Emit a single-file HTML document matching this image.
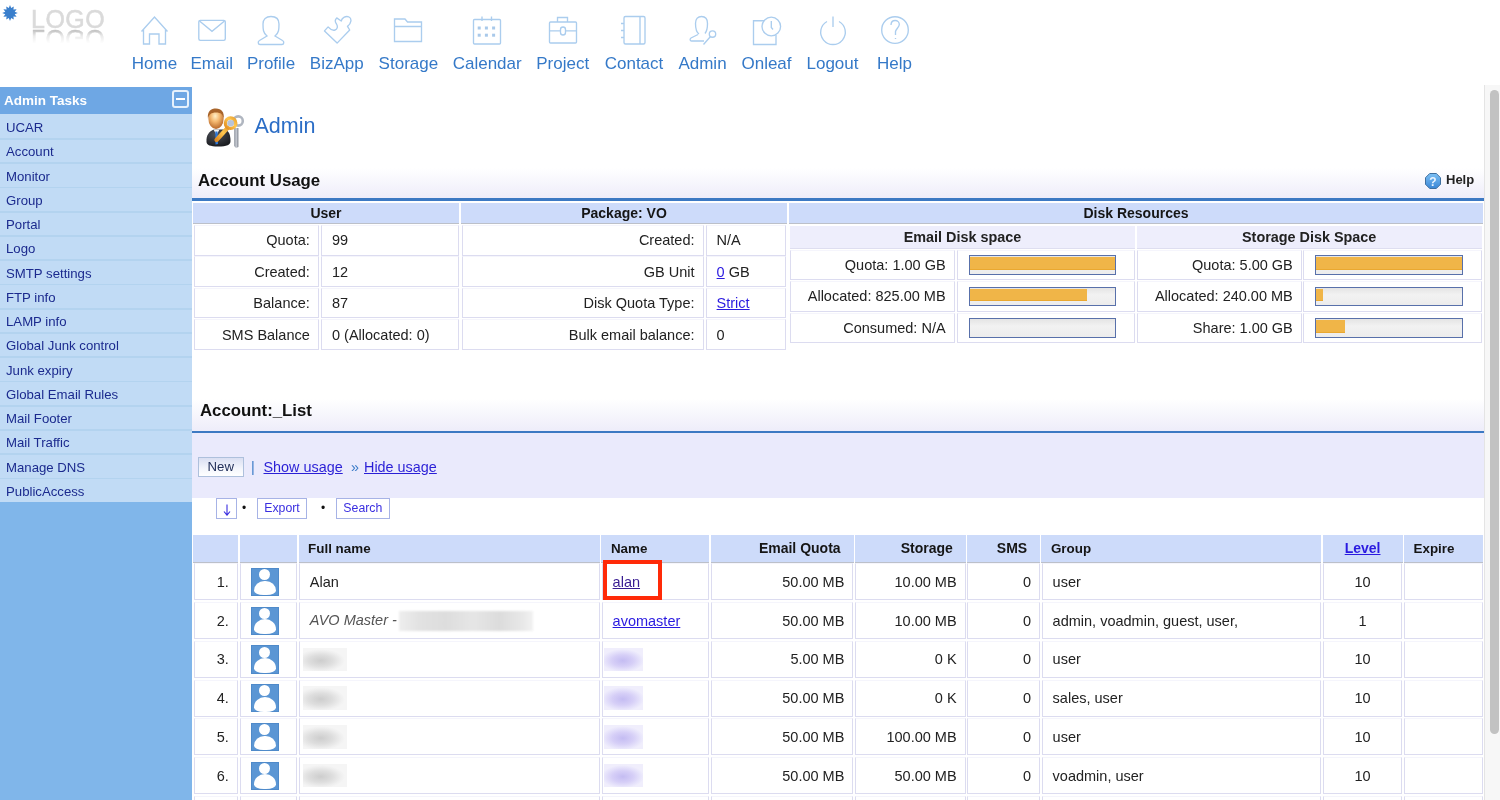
<!DOCTYPE html>
<html><head><meta charset="utf-8"><title>Admin</title>
<style>
*{box-sizing:border-box}
html,body{margin:0;padding:0;width:1500px;height:800px;overflow:hidden;background:#fff;font-family:"Liberation Sans",sans-serif;color:#222}
.abs{position:absolute}
#logo-star{left:2px;top:4.7px;width:16px;height:16px}
#logo{left:31px;top:7.3px;font-size:25px;color:#dadada;letter-spacing:0.5px;line-height:25px;-webkit-text-stroke:0.5px #dadada;filter:blur(0.5px)}
#logo2{left:31px;top:26px;font-size:25px;line-height:25px;letter-spacing:0.5px;color:#b0b0b0;-webkit-text-stroke:0.4px #b0b0b0;transform:scaleY(-1);-webkit-mask-image:linear-gradient(to top,rgba(0,0,0,.9) 12%,rgba(0,0,0,.25) 40%,rgba(0,0,0,0) 70%);filter:blur(0.6px)}
.nav{position:absolute;top:0;height:80px}
.nav svg{position:absolute;top:14px;left:50%;margin-left:-15px;width:30px;height:32px;fill:none;stroke:#abcdee;stroke-width:1.35}
.nav span{position:absolute;top:53.6px;left:0;transform:translateX(-50%);font-size:17px;color:#3579c8;white-space:nowrap;line-height:20px}
#side{left:0;top:86.5px;width:191.8px;height:714px;background:#80b6ea}
#side .hd{height:27.5px;background:#6ea7e4;color:#fff;font-weight:bold;font-size:13.5px;line-height:28px;padding-left:4px;position:relative}
#side .hd i{position:absolute;left:172px;top:3.5px;width:17.2px;height:17.6px;border:2px solid #e6f1fc;border-radius:3px}
#side .hd i:after{content:"";position:absolute;left:2.2px;right:2.2px;top:6.2px;height:1.8px;background:#fff}
#side .it{position:relative;height:24.25px;background:#c1dbf5;color:#1b2a8e;font-size:13.2px;line-height:27.8px;padding-left:6px}
#side .it+.it:before{content:"";position:absolute;left:0;right:0;top:-0.2px;height:1.9px;background:#b3d3ef}

#main{position:absolute;left:0;top:0;width:1500px;height:800px}
.th,.td,.sh,.bar{position:absolute}
.th{background:#cddbfa;border-bottom:1.8px solid #bcc0c9;font-weight:bold;font-size:13.4px;display:flex;align-items:center;justify-content:center;text-align:center;color:#151515}
.th.u{font-size:14px}
.th.l{justify-content:flex-start;padding-left:9.5px}
.th.r{justify-content:flex-end;padding-right:13px;font-size:14px}
.th.c{font-size:14px}
.th a{color:#2a1ae0;text-decoration:underline}
.sh{background:#eeeefc;font-weight:bold;font-size:14.4px;line-height:22px;text-align:center;color:#222;border-bottom:1px solid #dedef0}
.td{border:1px solid #dcdcf0;border-top-color:#f5f5fc;font-size:14.5px;color:#222;display:flex;align-items:center;white-space:nowrap}
.td.r{justify-content:flex-end;padding-right:8px}
.td.l{padding-left:10px}
.td.c{justify-content:center}
.td a{color:#2a1ae0;text-decoration:underline}
.td a.v{color:#381c92}
.td em{color:#555}
.bar{border:1px solid #5870aa;background:linear-gradient(#e4e4e4,#f2f2f2 40%,#ececec)}
.bar i{position:absolute;left:0;top:1px;height:12.5px;background:#f0b548;border-bottom:1px solid #eaa830}
.blur{display:inline-block;height:23.5px;vertical-align:middle}
.blur.g{background:radial-gradient(ellipse 55% 50% at 40% 55%,#cdcdcd 0%,#dedede 50%,#efefef 85%,#f5f5f5 100%)}
.blur.w{background:linear-gradient(90deg,#eeeeee 0%,#e2e2e2 15%,#dddddd 35%,#e6e6e6 55%,#dcdcdc 75%,#e8e8e8 92%,#f2f2f2 100%);filter:blur(1.2px)}
.blur.p{background:radial-gradient(ellipse 55% 50% at 48% 55%,#c4bcf2 0%,#d6cff7 50%,#e8e5fb 85%,#f0eefc 100%)}
.av{display:block;width:28.5px;height:28.25px;background:#5b96d4;position:relative;overflow:hidden;margin-left:-6.5px;box-shadow:inset 0 0 0 1px #4f8aca}
.av:before{content:"";position:absolute;left:8.4px;top:1.3px;width:11px;height:11px;border-radius:50%;background:#fff}
.av:after{content:"";position:absolute;left:3px;top:12.75px;width:22px;height:14.75px;border-radius:50% 50% 45% 45%/70% 70% 30% 30%;background:#fff}
.hdr{position:absolute;left:192px;width:1292px;background:linear-gradient(#fff 0%,#fff 20%,#ecebf9 100%)}
.hdr:after{content:"";position:absolute;left:0;right:0;bottom:0;height:2.6px;background:#3c79c3}
.hdr b{position:absolute;left:6px;font-size:16.8px;color:#111}
#scroll{position:absolute;left:1484px;top:85px;width:16px;height:715px;background:#f7f7f7;border-left:1px solid #e4e4e4}
#scroll i{position:absolute;left:4.5px;top:5px;width:9.5px;height:644px;border-radius:5px;background:#c2c2c2}
.btn2{position:absolute;border:1px solid #a7b3e6;background:#fff;color:#3a2ee0;font-size:12.3px;line-height:18px;text-align:center}
#root{position:absolute;left:0;top:0;width:1500px;height:800px;will-change:transform}
</style></head><body><div id="root">
<svg class="abs" id="logo-star" viewBox="0 0 16 16"><polygon fill="#3a7fcc" points="8,0 9.2,3 11.8,1.4 11.4,4.5 14.6,4.2 12.7,6.8 15.8,8 12.7,9.2 14.6,11.8 11.4,11.5 11.8,14.6 9.2,13 8,16 6.8,13 4.2,14.6 4.6,11.5 1.4,11.8 3.3,9.2 0.2,8 3.3,6.8 1.4,4.2 4.6,4.5 4.2,1.4 6.8,3"/></svg>
<div class="abs" id="logo">LOGO</div>
<div class="abs" id="logo2">LOGO</div>

<!-- NAV -->
<div class="nav" style="left:154.5px"><svg viewBox="0 0 30 32"><path d="M1.5 17.5 L14.5 3 L27.5 17.5 M3.5 15.5 V30 H9.5 V20 H19 V30 H25.5 V15.5"/></svg><span>Home</span></div>
<div class="nav" style="left:211.7px"><svg viewBox="0 0 30 32"><rect x="1.8" y="6.3" width="26.5" height="20" rx="1.5"/><path d="M2.5 7 L15 17.3 L27.5 7"/></svg><span>Email</span></div>
<div class="nav" style="left:271px"><svg viewBox="0 0 30 32"><path d="M11 22 C7 19 7 15 7 10 C7 5 10 2.5 15 2.5 C20 2.5 23 5 23 10 C23 15 23 19 19 22 L26.5 26.5 C28.5 27.5 28 30.5 26 30.5 H4 C2 30.5 1.5 27.5 3.5 26.5 Z"/></svg><span>Profile</span></div>
<div class="nav" style="left:336.8px"><svg viewBox="0 0 30 32"><path d="M15.1 29.1 L2.5 16.9 L6.1 12.9 C8.5 15.5 10.5 17 13 16 C15.5 15 16 12.5 14.5 10 C13 8 12.5 6 14.7 3.9 L19.2 7 C20 3.5 24 1.5 27 3 C30 4.5 29.5 9.5 25.5 12.4 L27.7 16 Z" stroke-linejoin="round"/></svg><span>BizApp</span></div>
<div class="nav" style="left:408.4px"><svg viewBox="0 0 30 32"><path d="M1.5 5 H12 L14.5 8 H28.5 V27.5 H1.5 Z M1.5 12.5 H28.5"/></svg><span>Storage</span></div>
<div class="nav" style="left:487.2px"><svg viewBox="0 0 30 32"><rect x="1.5" y="5.5" width="27" height="24.5" rx="1"/><path d="M10 2.5 V7 M19.5 2.5 V7"/><g fill="#a9c9ea" stroke="none"><rect x="5.7" y="12.5" width="3" height="3"/><rect x="12.9" y="12.5" width="3" height="3"/><rect x="20.1" y="12.5" width="3" height="3"/><rect x="5.7" y="19.7" width="3" height="3"/><rect x="12.9" y="19.7" width="3" height="3"/><rect x="20.1" y="19.7" width="3" height="3"/></g></svg><span>Calendar</span></div>
<div class="nav" style="left:562.7px"><svg viewBox="0 0 30 32"><rect x="1.5" y="8" width="27" height="21" rx="1"/><path d="M9.5 8 V3.5 H19.5 V8 M1.5 16.8 H12.5 M17.5 16.8 H28.5"/><rect x="12.5" y="13" width="5" height="8" rx="2.5"/></svg><span>Project</span></div>
<div class="nav" style="left:634px"><svg viewBox="0 0 30 32"><rect x="5" y="2.5" width="21" height="27.5" rx="1.5"/><path d="M21 2.5 V30 M2 9.5 H5 M2 16.5 H5 M2 23.5 H5"/></svg><span>Contact</span></div>
<div class="nav" style="left:702.5px"><svg viewBox="0 0 30 32"><path d="M11 20 C8 18 7.5 14 7.5 9.5 C7.5 5 10 2.5 13.5 2.5 C17 2.5 19.5 5 19.5 9.5 C19.5 13 19 17 17 19.5 M10 20.5 L3 24 C1.5 25 2 27 3.5 27 H16"/><circle cx="24.5" cy="20" r="3.2"/><path d="M22.5 22.5 L15.5 30.5"/></svg><span>Admin</span></div>
<div class="nav" style="left:766.5px"><svg viewBox="0 0 30 32"><path d="M12 6.7 H1.5 V30.5 H24 V21"/><circle cx="19.3" cy="12.5" r="9.3"/><path d="M19.3 7 V13.5 L21 15.5"/></svg><span>Onleaf</span></div>
<div class="nav" style="left:832.5px"><svg viewBox="0 0 30 32"><path d="M9 7.5 A12.3 12.3 0 1 0 21 7.5"/><path d="M15 2.5 V13"/></svg><span>Logout</span></div>
<div class="nav" style="left:894.5px"><svg viewBox="0 0 30 32"><circle cx="15" cy="16" r="13.3"/><path d="M11 11 C11 8 13 6.5 15.2 6.5 C17.5 6.5 19.3 8.3 19.3 10.5 C19.3 13 16 15 15.5 17.5 V21 M15.5 24 V25"/></svg><span>Help</span></div>

<!-- SIDEBAR -->
<div class="abs" id="side">
<div class="hd">Admin Tasks<i></i></div>
<div class="it">UCAR</div>
<div class="it">Account</div>
<div class="it">Monitor</div>
<div class="it">Group</div>
<div class="it">Portal</div>
<div class="it">Logo</div>
<div class="it">SMTP settings</div>
<div class="it">FTP info</div>
<div class="it">LAMP info</div>
<div class="it">Global Junk control</div>
<div class="it">Junk expiry</div>
<div class="it">Global Email Rules</div>
<div class="it">Mail Footer</div>
<div class="it">Mail Traffic</div>
<div class="it">Manage DNS</div>
<div class="it">PublicAccess</div>
</div>


<div id="main">
<!-- title -->
<svg class="abs" style="left:200px;top:104px;width:50px;height:48px" viewBox="0 0 50 48">
 <defs><radialGradient id="face" cx="45%" cy="35%" r="65%"><stop offset="0" stop-color="#fff0c8"/><stop offset=".45" stop-color="#f4b870"/><stop offset="1" stop-color="#b8682a"/></radialGradient>
 <radialGradient id="suit" cx="40%" cy="30%" r="70%"><stop offset="0" stop-color="#50545c"/><stop offset="1" stop-color="#1c1e22"/></radialGradient>
 <linearGradient id="gold" x1="0" y1="1" x2="1" y2="0"><stop offset="0" stop-color="#e08a20"/><stop offset=".6" stop-color="#ffc850"/><stop offset="1" stop-color="#e8a030"/></linearGradient>
 <linearGradient id="silv" x1="0" x2="1"><stop offset="0" stop-color="#8a909a"/><stop offset=".5" stop-color="#c8ccd4"/><stop offset="1" stop-color="#7a808a"/></linearGradient></defs>
 <path d="M6.5 38 C6 31 9 27.5 14 25.5 L25 25.5 C29 27 30.5 31 30.5 37 C30.5 41 27 42.5 18 42.5 C10 42.5 6.8 41 6.5 38 Z" fill="url(#suit)"/>
 <path d="M13.5 25.5 L16.5 31 L19.5 25.5 Z" fill="#f4f4f4"/>
 <path d="M15.3 27.5 L17.5 27.5 L18 40 L15.5 40.5 Z" fill="#2a78dc"/>
 <ellipse cx="16" cy="15" rx="7.6" ry="10" fill="url(#face)"/>
 <path d="M8 15 C7 7 11 4.5 16 4.5 C21.5 4.5 24.5 8 23.8 15 C23 10.5 21 8.5 16 8.5 C11 8.5 9 10.5 8 15 Z" fill="#a8642a"/>
 <path d="M34.2 24 L38.4 24 L38.4 43 L36 44 L34.2 42 Z" fill="url(#silv)"/>
 <circle cx="38.2" cy="17" r="4.6" fill="none" stroke="#b0b6c0" stroke-width="2.6"/>
 <path d="M16.5 36 L27.5 24" stroke="url(#gold)" stroke-width="4.2" stroke-linecap="round"/>
 <circle cx="30.6" cy="19.2" r="5.2" fill="none" stroke="url(#gold)" stroke-width="3.4"/>
 <circle cx="30.6" cy="19.2" r="3.3" fill="#b8c4d8"/>
</svg>
<div class="abs" style="left:254.5px;top:112.5px;font-size:21.5px;color:#2b6dc6;line-height:26px">Admin</div>

<div class="hdr" style="top:160px;height:40.5px"><b style="top:11px">Account Usage</b>
 <svg style="position:absolute;left:1233px;top:13px;width:16px;height:16px" viewBox="0 0 16 16"><defs><linearGradient id="hg" x1="0" y1="0" x2="0" y2="1"><stop offset="0" stop-color="#7cc0f4"/><stop offset="1" stop-color="#3a86d6"/></linearGradient></defs><polygon points="4.7,0.5 11.3,0.5 15.5,4.7 15.5,11.3 11.3,15.5 4.7,15.5 0.5,11.3 0.5,4.7" fill="url(#hg)" stroke="#3f6f9f" stroke-width="1"/><text x="8" y="12.5" font-size="12" font-weight="bold" text-anchor="middle" fill="#eaf4ff" font-family="Liberation Sans">?</text></svg>
 <span style="position:absolute;left:1254px;top:12px;font-weight:bold;font-size:13px;color:#222">Help</span>
</div>

<div class="hdr" style="top:390px;height:43.5px"><b style="top:11px;left:8px">Account:_List</b></div>
<div class="abs" style="left:192px;top:433px;width:1292px;height:65.4px;background:#eaeafc"></div>
<div class="abs" style="left:198px;top:457px;width:45.5px;height:19.8px;border:1px solid #aec0dc;background:linear-gradient(#dadff2,#f4f6fc 60%,#fff);font-size:13.2px;color:#22305a;text-align:center;line-height:18px">New</div>
<div class="abs" style="left:251px;top:457px;font-size:14.4px;color:#3a7bc8;line-height:20px">|</div>
<div class="abs" style="left:263.5px;top:457px;font-size:14.4px;color:#2a1fd6;line-height:20px;text-decoration:underline">Show usage</div>
<div class="abs" style="left:351px;top:457px;font-size:14.4px;color:#3a7bc8;line-height:20px">&raquo;</div>
<div class="abs" style="left:364px;top:457px;font-size:14.4px;color:#2a1fd6;line-height:20px;text-decoration:underline">Hide usage</div>
<div class="btn2" style="left:216.4px;top:498.4px;width:20.4px;height:20.4px"><svg style="position:absolute;left:5px;top:4.5px;width:10px;height:12px" viewBox="0 0 10 12"><path d="M5 0.5 V11 M2 7.5 L5 11.2 L8 7.5" fill="none" stroke="#3a2ee0" stroke-width="1.1"/></svg></div>
<div class="abs" style="left:242px;top:499px;font-size:12px;line-height:18px;color:#111">&bull;</div>
<div class="btn2" style="left:257px;top:498.4px;width:50px;height:20.4px">Export</div>
<div class="abs" style="left:321px;top:499px;font-size:12px;line-height:18px;color:#111">&bull;</div>
<div class="btn2" style="left:336px;top:498.4px;width:53.7px;height:20.4px">Search</div>
<div class="th u" style="left:193.00px;top:203.00px;width:266.00px;height:20.50px;"><span>User</span></div>
<div class="th u" style="left:461.00px;top:203.00px;width:326.00px;height:20.50px;"><span>Package: VO</span></div>
<div class="th u" style="left:789.00px;top:203.00px;width:694.00px;height:20.50px;"><span>Disk Resources</span></div>
<div class="td r" style="left:194.00px;top:225.00px;width:124.80px;height:30.60px;"><span>Quota:</span></div>
<div class="td l" style="left:321.00px;top:225.00px;width:137.50px;height:30.60px;"><span>99</span></div>
<div class="td r" style="left:462.00px;top:225.00px;width:241.50px;height:30.60px;"><span>Created:</span></div>
<div class="td l" style="left:705.60px;top:225.00px;width:80.40px;height:30.60px;"><span>N/A</span></div>
<div class="td r" style="left:194.00px;top:256.45px;width:124.80px;height:30.60px;"><span>Created:</span></div>
<div class="td l" style="left:321.00px;top:256.45px;width:137.50px;height:30.60px;"><span>12</span></div>
<div class="td r" style="left:462.00px;top:256.45px;width:241.50px;height:30.60px;"><span>GB Unit</span></div>
<div class="td l" style="left:705.60px;top:256.45px;width:80.40px;height:30.60px;"><span><a>0</a> GB</span></div>
<div class="td r" style="left:194.00px;top:287.90px;width:124.80px;height:30.60px;"><span>Balance:</span></div>
<div class="td l" style="left:321.00px;top:287.90px;width:137.50px;height:30.60px;"><span>87</span></div>
<div class="td r" style="left:462.00px;top:287.90px;width:241.50px;height:30.60px;"><span>Disk Quota Type:</span></div>
<div class="td l" style="left:705.60px;top:287.90px;width:80.40px;height:30.60px;"><span><a>Strict</a></span></div>
<div class="td r" style="left:194.00px;top:319.35px;width:124.80px;height:30.60px;"><span>SMS Balance</span></div>
<div class="td l" style="left:321.00px;top:319.35px;width:137.50px;height:30.60px;"><span>0 (Allocated: 0)</span></div>
<div class="td r" style="left:462.00px;top:319.35px;width:241.50px;height:30.60px;"><span>Bulk email balance:</span></div>
<div class="td l" style="left:705.60px;top:319.35px;width:80.40px;height:30.60px;"><span>0</span></div>
<div class="sh" style="left:790.30px;top:226.00px;width:344.30px;height:22.60px;"><span>Email Disk space</span></div>
<div class="sh" style="left:1136.60px;top:226.00px;width:345.20px;height:22.60px;"><span>Storage Disk Space</span></div>
<div class="td r" style="left:790.30px;top:249.60px;width:164.30px;height:30.60px;"><span>Quota: 1.00 GB</span></div>
<div class="td" style="left:956.80px;top:249.60px;width:177.80px;height:30.60px;"></div>
<div class="td r" style="left:1136.60px;top:249.60px;width:165.20px;height:30.60px;"><span>Quota: 5.00 GB</span></div>
<div class="td" style="left:1303.40px;top:249.60px;width:178.40px;height:30.60px;"></div>
<div class="bar" style="left:968.80px;top:255.20px;width:147.30px;height:19.40px;"><i style="width:145.3px"></i></div>
<div class="bar" style="left:1315.30px;top:255.20px;width:147.30px;height:19.40px;"><i style="width:145.3px"></i></div>
<div class="td r" style="left:790.30px;top:281.20px;width:164.30px;height:30.60px;"><span>Allocated: 825.00 MB</span></div>
<div class="td" style="left:956.80px;top:281.20px;width:177.80px;height:30.60px;"></div>
<div class="td r" style="left:1136.60px;top:281.20px;width:165.20px;height:30.60px;"><span>Allocated: 240.00 MB</span></div>
<div class="td" style="left:1303.40px;top:281.20px;width:178.40px;height:30.60px;"></div>
<div class="bar" style="left:968.80px;top:286.80px;width:147.30px;height:19.40px;"><i style="width:117.0px"></i></div>
<div class="bar" style="left:1315.30px;top:286.80px;width:147.30px;height:19.40px;"><i style="width:6.8px"></i></div>
<div class="td r" style="left:790.30px;top:312.80px;width:164.30px;height:30.60px;"><span>Consumed: N/A</span></div>
<div class="td" style="left:956.80px;top:312.80px;width:177.80px;height:30.60px;"></div>
<div class="td r" style="left:1136.60px;top:312.80px;width:165.20px;height:30.60px;"><span>Share: 1.00 GB</span></div>
<div class="td" style="left:1303.40px;top:312.80px;width:178.40px;height:30.60px;"></div>
<div class="bar" style="left:968.80px;top:318.40px;width:147.30px;height:19.40px;"></div>
<div class="bar" style="left:1315.30px;top:318.40px;width:147.30px;height:19.40px;"><i style="width:29.1px"></i></div>
<div class="th " style="left:193.00px;top:535.00px;width:45.00px;height:27.50px;"></div>
<div class="th " style="left:239.80px;top:535.00px;width:57.20px;height:27.50px;"></div>
<div class="th l" style="left:298.60px;top:535.00px;width:301.40px;height:27.50px;"><span>Full name</span></div>
<div class="th l" style="left:601.40px;top:535.00px;width:107.80px;height:27.50px;"><span>Name</span></div>
<div class="th r" style="left:711.00px;top:535.00px;width:142.60px;height:27.50px;"><span>Email Quota</span></div>
<div class="th r" style="left:855.00px;top:535.00px;width:110.80px;height:27.50px;"><span>Storage</span></div>
<div class="th r" style="left:967.00px;top:535.00px;width:73.20px;height:27.50px;"><span>SMS</span></div>
<div class="th l" style="left:1041.40px;top:535.00px;width:279.80px;height:27.50px;"><span>Group</span></div>
<div class="th c" style="left:1322.60px;top:535.00px;width:80.00px;height:27.50px;"><span><a>Level</a></span></div>
<div class="th l" style="left:1404.00px;top:535.00px;width:79.00px;height:27.50px;"><span>Expire</span></div>
<div class="td r" style="left:193.60px;top:563.30px;width:44.20px;height:37.20px;"><span>1.</span></div>
<div class="td c" style="left:240.00px;top:563.30px;width:56.80px;height:37.20px;"><span><s class="av"></s></span></div>
<div class="td l" style="left:298.80px;top:563.30px;width:301.00px;height:37.20px;"><span>Alan</span></div>
<div class="td l" style="left:601.60px;top:563.30px;width:107.40px;height:37.20px;"><span><a class="v">alan</a></span></div>
<div class="td r" style="left:711.20px;top:563.30px;width:142.20px;height:37.20px;"><span>50.00 MB</span></div>
<div class="td r" style="left:855.20px;top:563.30px;width:110.40px;height:37.20px;"><span>10.00 MB</span></div>
<div class="td r" style="left:967.20px;top:563.30px;width:72.80px;height:37.20px;"><span>0</span></div>
<div class="td l" style="left:1041.60px;top:563.30px;width:279.40px;height:37.20px;"><span>user</span></div>
<div class="td c" style="left:1322.80px;top:563.30px;width:79.60px;height:37.20px;"><span>10</span></div>
<div class="td l" style="left:1404.20px;top:563.30px;width:78.60px;height:37.20px;"></div>
<div class="td r" style="left:193.60px;top:602.05px;width:44.20px;height:37.20px;"><span>2.</span></div>
<div class="td c" style="left:240.00px;top:602.05px;width:56.80px;height:37.20px;"><span><s class="av"></s></span></div>
<div class="td l" style="left:298.80px;top:602.05px;width:301.00px;height:37.20px;"><span><em>AVO Master - </em><b class="blur w" style="width:134px;height:20px;margin-left:-2px"></b></span></div>
<div class="td l" style="left:601.60px;top:602.05px;width:107.40px;height:37.20px;"><span><a>avomaster</a></span></div>
<div class="td r" style="left:711.20px;top:602.05px;width:142.20px;height:37.20px;"><span>50.00 MB</span></div>
<div class="td r" style="left:855.20px;top:602.05px;width:110.40px;height:37.20px;"><span>10.00 MB</span></div>
<div class="td r" style="left:967.20px;top:602.05px;width:72.80px;height:37.20px;"><span>0</span></div>
<div class="td l" style="left:1041.60px;top:602.05px;width:279.40px;height:37.20px;"><span>admin, voadmin, guest, user,</span></div>
<div class="td c" style="left:1322.80px;top:602.05px;width:79.60px;height:37.20px;"><span>1</span></div>
<div class="td l" style="left:1404.20px;top:602.05px;width:78.60px;height:37.20px;"></div>
<div class="td r" style="left:193.60px;top:640.80px;width:44.20px;height:37.20px;"><span>3.</span></div>
<div class="td c" style="left:240.00px;top:640.80px;width:56.80px;height:37.20px;"><span><s class="av"></s></span></div>
<div class="td l" style="left:298.80px;top:640.80px;width:301.00px;height:37.20px;"><span><b class="blur g" style="width:44px;margin-left:-7px"></b></span></div>
<div class="td l" style="left:601.60px;top:640.80px;width:107.40px;height:37.20px;"><span><b class="blur p" style="width:39px;margin-left:-8.5px"></b></span></div>
<div class="td r" style="left:711.20px;top:640.80px;width:142.20px;height:37.20px;"><span>5.00 MB</span></div>
<div class="td r" style="left:855.20px;top:640.80px;width:110.40px;height:37.20px;"><span>0 K</span></div>
<div class="td r" style="left:967.20px;top:640.80px;width:72.80px;height:37.20px;"><span>0</span></div>
<div class="td l" style="left:1041.60px;top:640.80px;width:279.40px;height:37.20px;"><span>user</span></div>
<div class="td c" style="left:1322.80px;top:640.80px;width:79.60px;height:37.20px;"><span>10</span></div>
<div class="td l" style="left:1404.20px;top:640.80px;width:78.60px;height:37.20px;"></div>
<div class="td r" style="left:193.60px;top:679.55px;width:44.20px;height:37.20px;"><span>4.</span></div>
<div class="td c" style="left:240.00px;top:679.55px;width:56.80px;height:37.20px;"><span><s class="av"></s></span></div>
<div class="td l" style="left:298.80px;top:679.55px;width:301.00px;height:37.20px;"><span><b class="blur g" style="width:44px;margin-left:-7px"></b></span></div>
<div class="td l" style="left:601.60px;top:679.55px;width:107.40px;height:37.20px;"><span><b class="blur p" style="width:39px;margin-left:-8.5px"></b></span></div>
<div class="td r" style="left:711.20px;top:679.55px;width:142.20px;height:37.20px;"><span>50.00 MB</span></div>
<div class="td r" style="left:855.20px;top:679.55px;width:110.40px;height:37.20px;"><span>0 K</span></div>
<div class="td r" style="left:967.20px;top:679.55px;width:72.80px;height:37.20px;"><span>0</span></div>
<div class="td l" style="left:1041.60px;top:679.55px;width:279.40px;height:37.20px;"><span>sales, user</span></div>
<div class="td c" style="left:1322.80px;top:679.55px;width:79.60px;height:37.20px;"><span>10</span></div>
<div class="td l" style="left:1404.20px;top:679.55px;width:78.60px;height:37.20px;"></div>
<div class="td r" style="left:193.60px;top:718.30px;width:44.20px;height:37.20px;"><span>5.</span></div>
<div class="td c" style="left:240.00px;top:718.30px;width:56.80px;height:37.20px;"><span><s class="av"></s></span></div>
<div class="td l" style="left:298.80px;top:718.30px;width:301.00px;height:37.20px;"><span><b class="blur g" style="width:44px;margin-left:-7px"></b></span></div>
<div class="td l" style="left:601.60px;top:718.30px;width:107.40px;height:37.20px;"><span><b class="blur p" style="width:39px;margin-left:-8.5px"></b></span></div>
<div class="td r" style="left:711.20px;top:718.30px;width:142.20px;height:37.20px;"><span>50.00 MB</span></div>
<div class="td r" style="left:855.20px;top:718.30px;width:110.40px;height:37.20px;"><span>100.00 MB</span></div>
<div class="td r" style="left:967.20px;top:718.30px;width:72.80px;height:37.20px;"><span>0</span></div>
<div class="td l" style="left:1041.60px;top:718.30px;width:279.40px;height:37.20px;"><span>user</span></div>
<div class="td c" style="left:1322.80px;top:718.30px;width:79.60px;height:37.20px;"><span>10</span></div>
<div class="td l" style="left:1404.20px;top:718.30px;width:78.60px;height:37.20px;"></div>
<div class="td r" style="left:193.60px;top:757.05px;width:44.20px;height:37.20px;"><span>6.</span></div>
<div class="td c" style="left:240.00px;top:757.05px;width:56.80px;height:37.20px;"><span><s class="av"></s></span></div>
<div class="td l" style="left:298.80px;top:757.05px;width:301.00px;height:37.20px;"><span><b class="blur g" style="width:44px;margin-left:-7px"></b></span></div>
<div class="td l" style="left:601.60px;top:757.05px;width:107.40px;height:37.20px;"><span><b class="blur p" style="width:39px;margin-left:-8.5px"></b></span></div>
<div class="td r" style="left:711.20px;top:757.05px;width:142.20px;height:37.20px;"><span>50.00 MB</span></div>
<div class="td r" style="left:855.20px;top:757.05px;width:110.40px;height:37.20px;"><span>50.00 MB</span></div>
<div class="td r" style="left:967.20px;top:757.05px;width:72.80px;height:37.20px;"><span>0</span></div>
<div class="td l" style="left:1041.60px;top:757.05px;width:279.40px;height:37.20px;"><span>voadmin, user</span></div>
<div class="td c" style="left:1322.80px;top:757.05px;width:79.60px;height:37.20px;"><span>10</span></div>
<div class="td l" style="left:1404.20px;top:757.05px;width:78.60px;height:37.20px;"></div>
<div class="td r" style="left:193.60px;top:795.80px;width:44.20px;height:37.20px;"></div>
<div class="td c" style="left:240.00px;top:795.80px;width:56.80px;height:37.20px;"><span><s class="av"></s></span></div>
<div class="td l" style="left:298.80px;top:795.80px;width:301.00px;height:37.20px;"></div>
<div class="td l" style="left:601.60px;top:795.80px;width:107.40px;height:37.20px;"></div>
<div class="td r" style="left:711.20px;top:795.80px;width:142.20px;height:37.20px;"></div>
<div class="td r" style="left:855.20px;top:795.80px;width:110.40px;height:37.20px;"></div>
<div class="td r" style="left:967.20px;top:795.80px;width:72.80px;height:37.20px;"></div>
<div class="td l" style="left:1041.60px;top:795.80px;width:279.40px;height:37.20px;"></div>
<div class="td c" style="left:1322.80px;top:795.80px;width:79.60px;height:37.20px;"></div>
<div class="td l" style="left:1404.20px;top:795.80px;width:78.60px;height:37.20px;"></div>
<div class="abs" style="left:603.4px;top:560.3px;width:58.2px;height:40px;border:4.8px solid #ff2a08"></div>
<div id="scroll"><i></i></div>
</div>
</div></body></html>
